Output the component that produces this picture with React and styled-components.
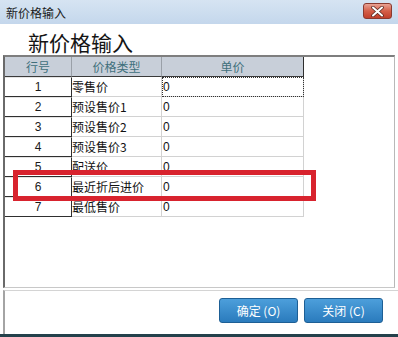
import React from 'react';
import styled, { createGlobalStyle } from 'styled-components';

const GlobalStyle = createGlobalStyle`
  html, body { margin: 0; padding: 0; background: #ffffff; }
  body { font-family: "Liberation Sans", "Noto Sans CJK SC", sans-serif; }
`;

const Window = styled.div`
  width: 398px;
  height: 337px;
  display: flex;
  flex-direction: column;
  background: #ffffff;
  border-bottom: 3px solid #23414b;
  box-sizing: border-box;
  overflow: hidden;
`;

const TitleBar = styled.div`
  height: 24px;
  flex: none;
  display: flex;
  align-items: center;
  justify-content: space-between;
  padding: 0 6px 0 6px;
  background: linear-gradient(#d6e4f2, #c4d7ec);
  box-sizing: border-box;
`;

const TitleText = styled.span`
  font-family: "Noto Sans CJK SC", sans-serif;
  font-size: 12px;
  color: #1b1b1b;
`;

const CloseButton = styled.div`
  width: 29px;
  height: 16px;
  margin-top: -2px;
  border: 1px solid #8a3a30;
  border-radius: 3px;
  background: linear-gradient(#e9a394, #d45f49 50%, #c2402c);
  display: flex;
  align-items: center;
  justify-content: center;
  box-sizing: border-box;
`;

const Heading = styled.div`
  height: 31px;
  flex: none;
  padding-left: 28px;
  font-family: "Noto Sans CJK SC", sans-serif;
  font-size: 21px;
  line-height: 36px;
  color: #151515;
`;

const GridPanel = styled.div`
  position: relative;
  height: 233px;
  flex: none;
  margin: 0 3px;
  border-top: 2px solid #7e7e7e;
  border-left: 2px solid #6a6a6a;
  border-right: 1px solid #b8b8b8;
  border-bottom: 1px solid #c8c8c8;
  box-sizing: border-box;
`;

const Table = styled.div`
  display: grid;
  grid-template-columns: 67px 90px 142px;
  grid-auto-rows: 20px;
`;

const HeadCell = styled.div`
  background: #c8cfd9;
  color: #3f6f7c;
  font-family: "Noto Sans CJK SC", sans-serif;
  font-size: 12px;
  display: flex;
  align-items: center;
  justify-content: center;
  border-right: 1px solid ${p => (p.$last ? '#2e2e2e' : '#9aa0a8')};
  border-bottom: 1px solid #3a3a3a;
  box-sizing: border-box;
`;

const RowHead = styled.div`
  background: #ffffff;
  color: #1a1a1a;
  font-size: 12px;
  display: flex;
  align-items: center;
  justify-content: center;
  border-top: 1px solid #e4e4e4;
  border-right: 1px solid #2f2f2f;
  border-bottom: 1px solid #2f2f2f;
  box-sizing: border-box;
`;

const Cell = styled.div`
  background: #ffffff;
  color: #111111;
  font-family: "Noto Sans CJK SC", "Liberation Sans", sans-serif;
  font-size: 12px;
  display: flex;
  align-items: center;
  padding-left: ${p => (p.$num ? '1px' : '0')};
  border-right: 1px solid #d2d2d2;
  border-bottom: 1px solid #d2d2d2;
  box-sizing: border-box;
  outline: ${p => (p.$focus ? '1px dotted #333' : 'none')};
  outline-offset: -1px;
`;

const Num = styled.span`
  font-family: "Liberation Sans", sans-serif;
  font-size: 12px;
`;

const Highlight = styled.div`
  position: absolute;
  left: 8px;
  top: 113px;
  width: 303px;
  height: 31px;
  border: 5px solid #d8232e;
  box-sizing: border-box;
  pointer-events: none;
`;

const Footer = styled.div`
  flex: 1;
  margin: 2px 0 0 3px;
  border-top: 1px solid #d4d4d4;
  border-left: 2px solid #a4a4a4;
  display: flex;
  align-items: center;
  justify-content: flex-end;
  gap: 6px;
  padding: 0 15px 4px 0;
  box-sizing: border-box;
`;

const Button = styled.button`
  width: 79px;
  height: 25px;
  border: 1px solid #1d5f95;
  border-radius: 3px;
  background: linear-gradient(#4d9fdb, #2a7bbd);
  color: #ffffff;
  font-family: "Noto Sans CJK SC", sans-serif;
  font-size: 12px;
  padding: 0;
`;

const rows = [
  ['1', '零售价'],
  ['2', '预设售价1'],
  ['3', '预设售价2'],
  ['4', '预设售价3'],
  ['5', '配送价'],
  ['6', '最近折后进价'],
  ['7', '最低售价'],
];

export default function App() {
  return (
    <Window>
      <GlobalStyle />
      <TitleBar>
        <TitleText>新价格输入</TitleText>
        <CloseButton>
          <svg width="13" height="11" viewBox="0 0 13 11">
            <path d="M2 1.5 L11 9.5 M11 1.5 L2 9.5" stroke="#5a2a22" strokeWidth="3.6" strokeLinecap="round" />
            <path d="M2 1.5 L11 9.5 M11 1.5 L2 9.5" stroke="#ffffff" strokeWidth="2" strokeLinecap="round" />
          </svg>
        </CloseButton>
      </TitleBar>
      <Heading>新价格输入</Heading>
      <GridPanel>
        <Table>
          <HeadCell>行号</HeadCell>
          <HeadCell>价格类型</HeadCell>
          <HeadCell $last>单价</HeadCell>
          {rows.map(([n, name], i) => (
            <React.Fragment key={n}>
              <RowHead>{n}</RowHead>
              <Cell>{name}</Cell>
              <Cell $num $focus={i === 0}><Num>0</Num></Cell>
            </React.Fragment>
          ))}
        </Table>
        <Highlight />
      </GridPanel>
      <Footer>
        <Button>确定 (O)</Button>
        <Button>关闭 (C)</Button>
      </Footer>
    </Window>
  );
}
